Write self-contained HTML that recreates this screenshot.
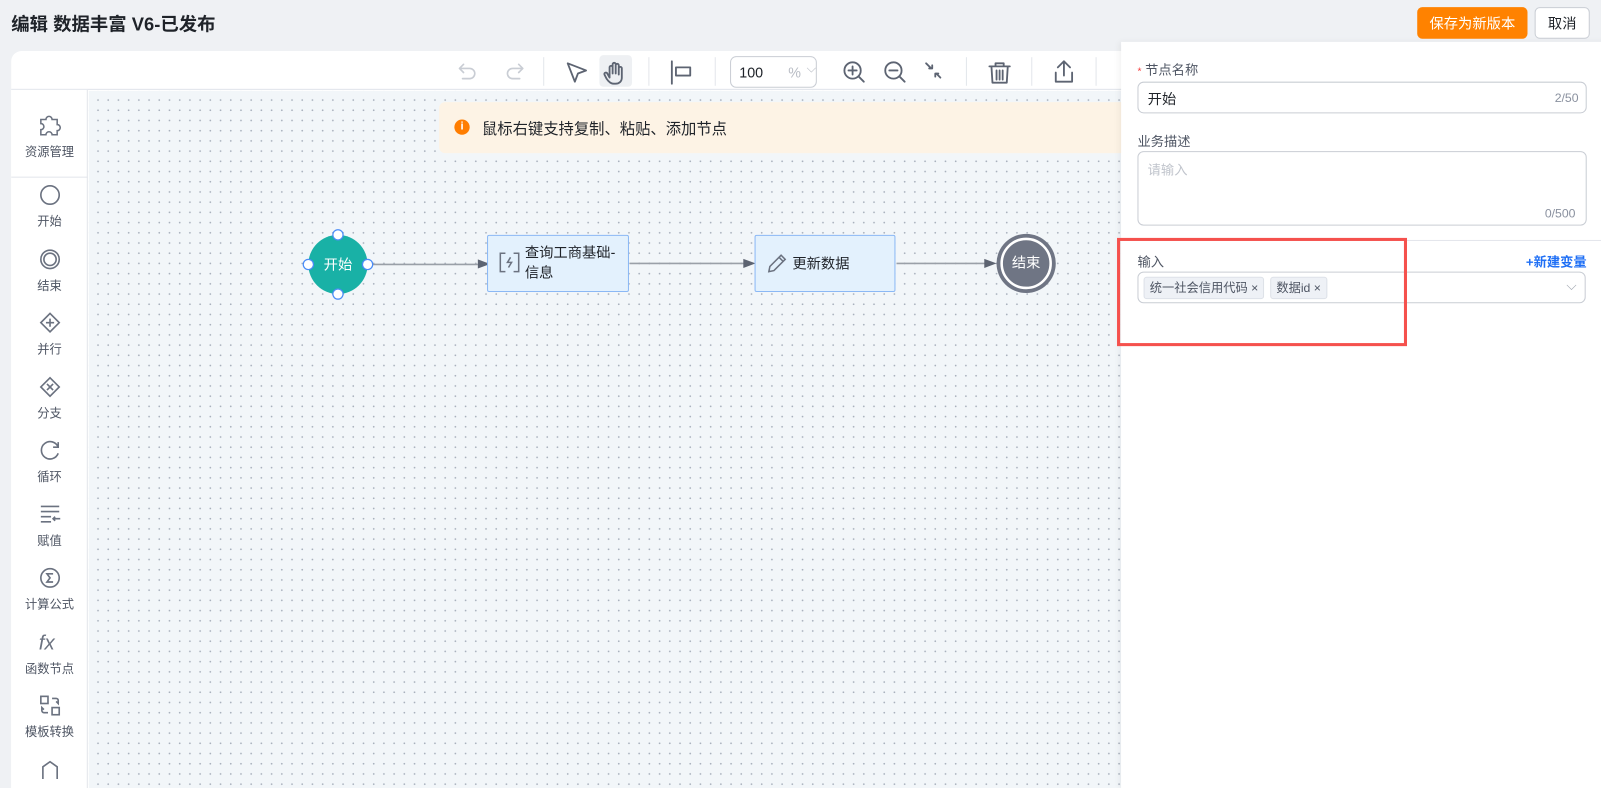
<!DOCTYPE html><html><head><meta charset="utf-8"><style>
*{box-sizing:border-box;margin:0;padding:0}
html,body{width:1601px;height:772px;overflow:hidden;background:#eff1f4}
#w{position:absolute;left:0;top:0;width:1568px;height:756px;transform:scale(1.02105);transform-origin:0 0;font-family:"Liberation Sans","Noto Sans CJK SC",sans-serif;color:#1f2329}
.abs{position:absolute}
.title{left:11px;top:10px;font-size:18px;font-weight:bold;color:#1f2329}
.btn{top:7px;height:31px;border-radius:5px;font-size:14px;display:flex;align-items:center;justify-content:center}
.card{left:11px;top:50px;width:1100px;height:722px;background:#fff;border-radius:10px 0 0 0}
.tb{left:11px;top:50px;width:1100px;height:38px;border-bottom:1px solid #dfe3ea}
.side{left:11px;top:88px;width:75px;height:684px;border-right:1px solid #e3e6eb;background:#fff}
.canvas{left:87px;top:89px;width:1011px;height:683px;background-color:#f2f6f9;background-image:radial-gradient(circle,#a9b1bd 0.8px,transparent 1px);background-size:10px 10px;background-position:4px 4px}
.si{position:absolute;left:0;width:75px;text-align:center;font-size:12px;color:#4e5563}
.si svg{display:block;margin:0 auto 6px}
.panel{left:1098px;top:41px;width:503px;height:731px;background:#fff;box-shadow:-2px 0 6px rgba(0,0,0,.06)}
.lbl{font-size:13px;color:#4e5563}
.inp{border:1px solid #c9cdd4;border-radius:6px;background:#fff}
.tag{position:absolute;top:4px;height:22px;background:#eef1f6;border:1px solid #dde1e8;border-radius:3px;font-size:12px;color:#4e5563;padding:0 5px;line-height:20px}
.node{border:1.5px solid #8bb8f5;background:#e3f1fd;border-radius:2px;font-size:14px;color:#1f2329}
.sep{position:absolute;top:56px;width:1px;height:28px;background:#e3e6eb}
</style></head><body><div id="w">
<div class="abs title">编辑 数据丰富 V6-已发布</div>
<div class="abs btn" style="left:1388px;width:108px;background:#ff8200;color:#fff">保存为新版本</div>
<div class="abs btn" style="left:1503px;width:54px;background:#fff;border:1px solid #c9cdd4;color:#1f2329">取消</div>
<div class="abs card"></div>
<div class="abs tb"></div>
<div class="abs" style="left:587px;top:54px;width:32px;height:31px;background:#eef0f3;border-radius:4px"></div>
<svg class="abs" style="left:440px;top:54px" width="680" height="34" fill="none" stroke-linecap="round" stroke-linejoin="round">
<g stroke="#c9cdd4" stroke-width="1.6"><path d="M14 9l-4 4 4 4M10 13h10a5 5 0 010 10h-7"/><path d="M68 9l4 4-4 4M72 13H62a5 5 0 000 10h7"/></g>
<g stroke="#5d6472" stroke-width="1.8"><path d="M116 8l18 7-8 3-3 8z"/>
<path d="M157 22v-10a1.5 1.5 0 013 0v6v-9a1.5 1.5 0 013 0v9v-8a1.5 1.5 0 013 0v9v-6a1.5 1.5 0 013 0v9c0 4-3 6-6 6h-2c-3 0-5-2-7-5l-2-4a1.5 1.5 0 012.5-1.5z"/>
<path d="M218 6v22M222 12h14v8h-14z"/>
<circle cx="395" cy="15" r="8"/><path d="M391 15h8M395 11v8M401 21l5 5"/>
<circle cx="435" cy="15" r="8"/><path d="M431 15h8M441 21l5 5"/>
<path d="M467 8l5 5M473 13h-3M473 13v-3M481 22l-4-4M476 18h3M476 18v3"/>
<path d="M529 11h20M535 11V8h8v3M531 11l1 16h14l1-16M536 15v9M539 15v9M542 15v9"/>
<path d="M602 6v14M596 12l6-6 6 6M594 17v9h16v-9"/>
</g></svg>
<div class="sep" style="left:532px"></div><div class="sep" style="left:635px"></div><div class="sep" style="left:700px"></div><div class="sep" style="left:946px"></div><div class="sep" style="left:1010px"></div><div class="sep" style="left:1073px"></div>
<div class="abs" style="left:715px;top:55px;width:85px;height:31px;border:1px solid #c9cdd4;border-radius:6px;font-size:14px;padding:7px 8px;color:#1f2329">100<span style="position:absolute;left:56px;color:#b8bcc4">%</span><span style="position:absolute;left:74px;top:4px;color:#b8bcc4;font-size:12px">⌵</span></div>
<div class="abs side">
<div class="si" style="top:20px"><svg width="26" height="26" fill="none" stroke="#6b7280" stroke-width="1.5"><path d="M4 9h5a3 3 0 116 0h5v5a3 3 0 010 6v4h-5a3 3 0 00-6 0H4v-5a3 3 0 000-6z"/></svg>资源管理</div>
<div style="position:absolute;top:85px;left:0;width:75px;border-top:1px solid #e3e6eb"></div>
<div class="si" style="top:92px"><svg width="22" height="22" fill="none" stroke="#6b7280" stroke-width="1.6"><circle cx="11" cy="11" r="9"/></svg>开始</div>
<div class="si" style="top:155px"><svg width="22" height="22" fill="none" stroke="#6b7280" stroke-width="1.6"><circle cx="11" cy="11" r="9"/><circle cx="11" cy="11" r="6"/></svg>结束</div>
<div class="si" style="top:217px"><svg width="22" height="22" fill="none" stroke="#6b7280" stroke-width="1.6"><path d="M11 2l9 9-9 9-9-9z"/><path d="M7 11h8M11 7v8"/></svg>并行</div>
<div class="si" style="top:280px"><svg width="22" height="22" fill="none" stroke="#6b7280" stroke-width="1.6"><path d="M11 2l9 9-9 9-9-9z"/><path d="M8 8l6 6M14 8l-6 6"/></svg>分支</div>
<div class="si" style="top:342px"><svg width="22" height="22" fill="none" stroke="#6b7280" stroke-width="1.6"><path d="M19 8a8.5 8.5 0 100 6M19 3v5h-5"/></svg>循环</div>
<div class="si" style="top:405px"><svg width="22" height="22" fill="none" stroke="#6b7280" stroke-width="1.6"><path d="M2 3h18M2 8h18M2 13h10M2 18h10M14 15h7M16 13l-2 2 2 2"/></svg>赋值</div>
<div class="si" style="top:467px"><svg width="22" height="22" fill="none" stroke="#6b7280" stroke-width="1.6"><circle cx="11" cy="11" r="9"/><path d="M14 7H8l3 4-3 4h6"/></svg>计算公式</div>
<div class="si" style="top:530px"><svg width="24" height="22"><text x="1" y="18" font-size="20" font-style="italic" font-family="Liberation Sans" fill="#6b7280">fx</text></svg>函数节点</div>
<div class="si" style="top:592px"><svg width="22" height="22" fill="none" stroke="#6b7280" stroke-width="1.6"><rect x="2" y="2" width="7" height="7"/><rect x="13" y="13" width="7" height="7"/><path d="M13 4h4a2 2 0 012 2v3l-2-2M9 18H5a2 2 0 01-2-2v-3l2 2"/></svg>模板转换</div>
<div class="si" style="top:655px"><svg width="22" height="22" fill="none" stroke="#6b7280" stroke-width="1.6"><path d="M4 20V8l7-5 7 5v12"/></svg></div>
</div>
<div class="abs canvas"></div>
<div class="abs" style="left:430px;top:100px;width:680px;height:50px;background:#fdf3e5;border-radius:6px"></div>
<div class="abs" style="left:445px;top:117px;width:15px;height:15px;border-radius:50%;background:#ff7d00;color:#fff;font-size:11px;text-align:center;line-height:15px;font-weight:bold">i</div>
<div class="abs" style="left:472px;top:115px;font-size:15px;color:#1f2329">鼠标右键支持复制、粘贴、添加节点</div>
<svg class="abs" style="left:290px;top:220px" width="760" height="80" fill="none">
<g stroke="#9aa0a8" stroke-width="1.5"><path d="M72 39H178M327 38H440M588 38H676"/></g>
<g fill="#5d6472"><path d="M178 34l12 4.5-12 4.5z"/><path d="M438 33.5l12 4.5-12 4.5z"/><path d="M674 33.5l12 4.5-12 4.5z"/></g>
<circle cx="41" cy="39" r="29" fill="#19b1a6"/>
<g fill="#fff" stroke="#4a8cf7" stroke-width="1.2"><circle cx="41" cy="10" r="5"/><circle cx="41" cy="68" r="5"/><circle cx="12" cy="39" r="5"/><circle cx="70" cy="39" r="5"/></g>
<circle cx="715" cy="38" r="29" fill="#6f7584"/><circle cx="715" cy="38" r="24" stroke="#fff" stroke-width="2.5"/>
</svg>
<div class="abs" style="left:317px;top:249px;font-size:14px;color:#fff">开始</div>
<div class="abs" style="left:991px;top:247px;font-size:14px;color:#fff">结束</div>
<div class="abs node" style="left:477px;top:230px;width:139px;height:56px"><svg class="abs" style="left:10px;top:15px" width="22" height="22" fill="none" stroke="#6b7280" stroke-width="1.5"><path d="M7 2H2v18h5M15 2h5v18h-5M12 6l-3 5h4l-3 5"/></svg><div class="abs" style="left:36px;top:6px;line-height:20px">查询工商基础-<br>信息</div></div>
<div class="abs node" style="left:739px;top:230px;width:138px;height:56px"><svg class="abs" style="left:10px;top:16px" width="22" height="22" fill="none" stroke="#6b7280" stroke-width="1.5"><path d="M3 19l1-5L15 3l4 4L8 18zM13 5l4 4"/></svg><div class="abs" style="left:36px;top:17px">更新数据</div></div>
<div class="abs panel">
<div class="abs lbl" style="left:16px;top:17px"><span style="color:#f53f3f;font-size:10px">*</span> 节点名称</div>
<div class="abs inp" style="left:16px;top:39px;width:440px;height:31px;font-size:14px;padding:6px 9px">开始<span style="position:absolute;right:7px;top:8px;font-size:12px;color:#8a919f">2/50</span></div>
<div class="abs lbl" style="left:16px;top:87px">业务描述</div>
<div class="abs inp" style="left:16px;top:107px;width:440px;height:73px;font-size:13px;padding:7px 9px;color:#c0c4cc">请输入<span style="position:absolute;right:10px;bottom:4px;font-size:12px;color:#8a919f">0/500</span></div>
<div class="abs" style="left:0;top:194px;width:503px;border-top:1px solid #e3e6eb"></div>
<div class="abs lbl" style="left:16px;top:205px">输入</div>
<div class="abs" style="right:47px;top:205px;font-size:13px;color:#1f6ff5;font-weight:bold">+新建变量</div>
<div class="abs inp" style="left:16px;top:225px;width:439px;height:31px">
<div class="tag" style="left:5px">统一社会信用代码 ×</div><div class="tag" style="left:129px">数据id ×</div>
<span style="position:absolute;right:8px;top:5px;color:#a0a6b0;font-size:13px">⌵</span></div>
</div>
<div class="abs" style="left:1094px;top:233px;width:284px;height:106px;border:3px solid #f5514d"></div>
</div></body></html>
